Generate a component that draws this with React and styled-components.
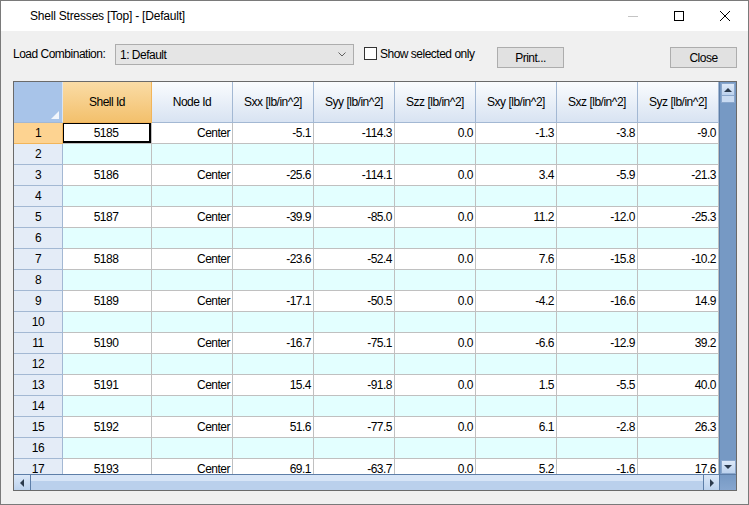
import React from 'react';
import styled, { createGlobalStyle } from 'styled-components';

const FONT = `"Liberation Sans", Arial, sans-serif`;

const Global = createGlobalStyle`
  html, body { margin: 0; padding: 0; background: #ffffff; }
  body { font-family: ${FONT}; }
  * { box-sizing: border-box; }
`;

const Window = styled.div`
  width: 749px;
  height: 505px;
  border: 1px solid #7a7a7a;
  background: #f0f0f0;
  display: flex;
  flex-direction: column;
  overflow: hidden;
  font-family: ${FONT};
  font-size: 12px;
  letter-spacing: -0.5px;
  color: #000;
`;

const TitleBar = styled.div`
  height: 30px;
  background: #ffffff;
  display: flex;
  align-items: center;
  flex-shrink: 0;
`;

const Title = styled.div`
  flex: 1;
  padding-left: 29px;
  font-size: 12px;
  letter-spacing: -0.2px;
  color: #000;
`;

const CaptionButton = styled.div`
  width: 46px;
  height: 30px;
  display: flex;
  align-items: center;
  justify-content: center;
`;

const Toolbar = styled.div`
  height: 50px;
  flex-shrink: 0;
  display: flex;
  align-items: flex-start;
  padding: 13px 11px 0 12px;
`;

const Label = styled.div`
  width: 102px;
  height: 21px;
  line-height: 20px;
  white-space: nowrap;
`;

const Combo = styled.div`
  width: 239px;
  height: 21px;
  border: 1px solid #adadad;
  background: #e5e5e5;
  display: flex;
  align-items: center;
  padding: 0 7px 0 4px;
  justify-content: space-between;
`;

const CheckGroup = styled.div`
  width: 133px;
  margin-left: 10px;
  height: 21px;
  display: flex;
  align-items: center;
  gap: 3px;
  margin-top: -1px;
  white-space: nowrap;
`;

const CheckBox = styled.div`
  width: 13px;
  height: 13px;
  flex-shrink: 0;
  border: 1px solid #333333;
  background: #ffffff;
`;

const Button = styled.div`
  width: 67px;
  height: 21px;
  margin-top: 3px;
  margin-left: ${p => (p.$push ? 'auto' : '0')};
  border: 1px solid #adadad;
  background: #e1e1e1;
  display: flex;
  align-items: center;
  justify-content: center;
`;

const Frame = styled.div`
  margin-left: 12px;
  width: 724px;
  height: 410px;
  border: 1px solid #6a6a6a;
  display: flex;
  flex-direction: column;
  background: #ffffff;
`;

const Upper = styled.div`
  display: flex;
  height: 392px;
`;

const Viewport = styled.div`
  width: 705px;
  height: 392px;
  overflow: hidden;
`;

const COLS = '49px 89px repeat(7, 81px)';

const HeaderRow = styled.div`
  display: grid;
  grid-template-columns: ${COLS};
  height: 41px;
`;

const HeadCell = styled.div`
  display: flex;
  align-items: center;
  justify-content: center;
  border-right: 1px solid ${p => (p.$sel ? '#f2b55a' : '#a3b8d3')};
  border-bottom: 1px solid ${p => (p.$sel ? '#f2b55a' : '#a3b8d3')};
  background: ${p =>
    p.$sel
      ? 'linear-gradient(#fadca6, #f3c06c)'
      : 'linear-gradient(#fafcfe, #d8e3f2)'};
  white-space: nowrap;
  padding-bottom: 1px;
`;

const Corner = styled.div`
  position: relative;
  background: #a8c4e9;
  border-right: 1px solid #d9e4f3;
  border-bottom: 1px solid #a3b8d3;
`;

const CornerMark = styled.div`
  position: absolute;
  right: 3px;
  bottom: 3px;
  width: 0;
  height: 0;
  border-left: 8px solid transparent;
  border-bottom: 8px solid #f2f6fc;
`;

const Row = styled.div`
  display: grid;
  grid-template-columns: ${COLS};
  height: 21px;
  background: ${p => (p.$alt ? '#e3ffff' : '#ffffff')};
`;

const RowHead = styled.div`
  display: flex;
  align-items: center;
  justify-content: center;
  background: ${p => (p.$sel ? '#fdd391' : '#e4ecf7')};
  border-right: 1px solid ${p => (p.$sel ? '#f2b55a' : '#a3b8d3')};
  border-bottom: 1px solid ${p => (p.$sel ? '#f2b55a' : '#a3b8d3')};
`;

const Cell = styled.div`
  display: flex;
  align-items: center;
  justify-content: ${p => (p.$center ? 'center' : 'flex-end')};
  padding-right: 2px;
  border-right: 1px solid #c0c0c0;
  border-bottom: 1px solid #c0c0c0;
  white-space: nowrap;
  overflow: hidden;
  background: ${p => (p.$active ? '#ffffff' : 'transparent')};
  box-shadow: ${p => (p.$active ? 'inset 1px 1px 0 #000, inset -2px -2px 0 #000' : 'none')};
`;

const VScroll = styled.div`
  width: 17px;
  height: 392px;
  background: #7699c4;
  border-left: 1px solid #5d7ea8;
  display: flex;
  flex-direction: column;
  justify-content: space-between;
  align-items: center;
`;

const VTop = styled.div`
  display: flex;
  flex-direction: column;
  align-items: center;
  width: 15px;
  padding-top: 1px;
`;

const ArrowBtn = styled.div`
  width: ${p => p.$w || 14}px;
  height: ${p => p.$h || 13}px;
  background: linear-gradient(#dde9f8, #bcd2ee);
  border: 1px solid #8aa7cc;
  display: flex;
  align-items: center;
  justify-content: center;
`;

const VThumb = styled.div`
  width: 14px;
  height: 7px;
  background: #c9dbf2;
  border: 1px solid #8aa7cc;
  border-top: none;
`;

const Lower = styled.div`
  display: flex;
  height: 16px;
`;

const HScroll = styled.div`
  width: 705px;
  height: 16px;
  display: flex;
  border-top: 1px solid #5d7ea8;
  background: linear-gradient(#d7e5f7 0%, #d7e5f7 40%, #bad0ec 41%, #bad0ec 100%);
`;

const HTrack = styled.div`
  flex: 1;
`;

const HBtn = styled.div`
  width: ${p => p.$w}px;
  height: 15px;
  display: flex;
  align-items: center;
  justify-content: center;
  background: linear-gradient(#dbe8f8, #bcd2ee);
  border-left: ${p => (p.$left ? '1px solid #5d7ea8' : 'none')};
  border-right: ${p => (p.$right ? '1px solid #5d7ea8' : 'none')};
`;

const ScrollCorner = styled.div`
  width: 17px;
  height: 16px;
  background: linear-gradient(#7699c4, #86a6cf);
  border-top: 1px solid #5d7ea8;
  border-left: 1px solid #5d7ea8;
`;

const Tri = ({ dir }) => {
  const pts = {
    up: '0,5 4,1 8,5',
    down: '0,1 8,1 4,5',
    left: '5,0 5,8 1,4',
    right: '1,0 1,8 5,4',
  }[dir];
  const vertical = dir === 'up' || dir === 'down';
  return (
    <svg width={vertical ? 8 : 6} height={vertical ? 6 : 8} viewBox={vertical ? '0 0 8 6' : '0 0 6 8'}>
      <polygon points={pts} fill="#2b3a4d" />
    </svg>
  );
};

const columns = ['Shell Id', 'Node Id', 'Sxx [lb/in^2]', 'Syy [lb/in^2]', 'Szz [lb/in^2]', 'Sxy [lb/in^2]', 'Sxz [lb/in^2]', 'Syz [lb/in^2]'];

const data = [
  ['5185', 'Center', '-5.1', '-114.3', '0.0', '-1.3', '-3.8', '-9.0'],
  ['5186', 'Center', '-25.6', '-114.1', '0.0', '3.4', '-5.9', '-21.3'],
  ['5187', 'Center', '-39.9', '-85.0', '0.0', '11.2', '-12.0', '-25.3'],
  ['5188', 'Center', '-23.6', '-52.4', '0.0', '7.6', '-15.8', '-10.2'],
  ['5189', 'Center', '-17.1', '-50.5', '0.0', '-4.2', '-16.6', '14.9'],
  ['5190', 'Center', '-16.7', '-75.1', '0.0', '-6.6', '-12.9', '39.2'],
  ['5191', 'Center', '15.4', '-91.8', '0.0', '1.5', '-5.5', '40.0'],
  ['5192', 'Center', '51.6', '-77.5', '0.0', '6.1', '-2.8', '26.3'],
  ['5193', 'Center', '69.1', '-63.7', '0.0', '5.2', '-1.6', '17.6'],
];

const rows = [];
for (let i = 0; i < 17; i++) {
  const n = i + 1;
  rows.push({ n, values: i % 2 === 0 ? data[i / 2] : null });
}

export default function App() {
  return (
    <>
      <Global />
      <Window>
        <TitleBar>
          <Title>Shell Stresses [Top] - [Default]</Title>
          <CaptionButton>
            <svg width="10" height="10" viewBox="0 0 10 10">
              <line x1="0" y1="5.5" x2="10" y2="5.5" stroke="#c4c4c4" strokeWidth="1" />
            </svg>
          </CaptionButton>
          <CaptionButton>
            <svg width="10" height="10" viewBox="0 0 10 10">
              <rect x="0.5" y="0.5" width="9" height="9" fill="none" stroke="#000" strokeWidth="1" />
            </svg>
          </CaptionButton>
          <CaptionButton>
            <svg width="10" height="10" viewBox="0 0 10 10">
              <path d="M0 0 L10 10 M10 0 L0 10" stroke="#000" strokeWidth="1" />
            </svg>
          </CaptionButton>
        </TitleBar>
        <Toolbar>
          <Label>Load Combination:</Label>
          <Combo>
            <span>1: Default</span>
            <svg width="8" height="5" viewBox="0 0 8 5">
              <polyline points="0.5,0.5 4,4 7.5,0.5" fill="none" stroke="#606060" strokeWidth="1" />
            </svg>
          </Combo>
          <CheckGroup>
            <CheckBox />
            <span>Show selected only</span>
          </CheckGroup>
          <Button>Print...</Button>
          <Button $push>Close</Button>
        </Toolbar>
        <Frame>
          <Upper>
            <Viewport>
              <HeaderRow>
                <Corner>
                  <CornerMark />
                </Corner>
                {columns.map((c, i) => (
                  <HeadCell key={c} $sel={i === 0}>{c}</HeadCell>
                ))}
              </HeaderRow>
              {rows.map(r => (
                <Row key={r.n} $alt={r.n % 2 === 0}>
                  <RowHead $sel={r.n === 1}>{r.n}</RowHead>
                  {columns.map((c, ci) => (
                    <Cell key={c} $center={ci === 0} $active={r.n === 1 && ci === 0}>
                      {r.values ? r.values[ci] : ''}
                    </Cell>
                  ))}
                </Row>
              ))}
            </Viewport>
            <VScroll>
              <VTop>
                <ArrowBtn $w={14} $h={13}>
                  <Tri dir="up" />
                </ArrowBtn>
                <VThumb />
              </VTop>
              <ArrowBtn $w={15} $h={14}>
                <Tri dir="down" />
              </ArrowBtn>
            </VScroll>
          </Upper>
          <Lower>
            <HScroll>
              <HBtn $w={17} $right>
                <Tri dir="left" />
              </HBtn>
              <HTrack />
              <HBtn $w={16} $left>
                <Tri dir="right" />
              </HBtn>
            </HScroll>
            <ScrollCorner />
          </Lower>
        </Frame>
      </Window>
    </>
  );
}
